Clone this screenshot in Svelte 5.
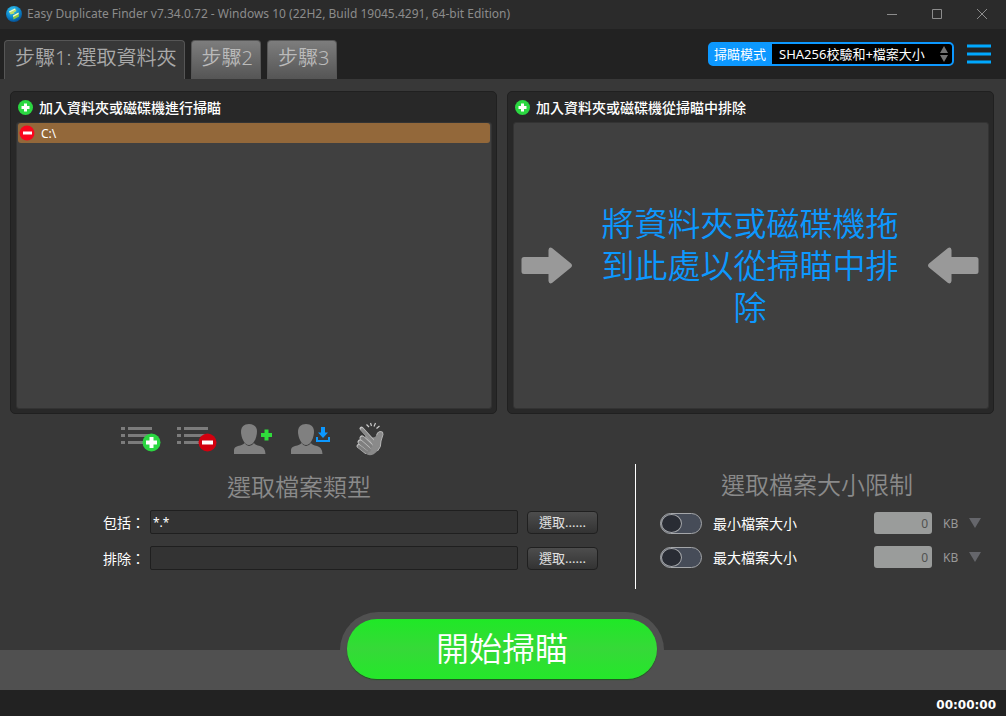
<script lang="ts">
  let scanMode = 'sha256';
  let includeMask = '*.*';
  let excludeMask = '';
  let activeTab = 0;

  const tabs = ['步驟1: 選取資料夾', '步驟2', '步驟3'];
  const folders = ['C:\\'];

  let limits = [
    { id: 'min', label: '最小檔案大小', enabled: false, value: '0', unit: 'KB' },
    { id: 'max', label: '最大檔案大小', enabled: false, value: '0', unit: 'KB' }
  ];
</script>

<div class="window">
  <header class="titlebar">
    <svg class="logo" width="16" height="16" viewBox="0 0 16 16" aria-hidden="true">
      <defs>
        <radialGradient id="globe" cx="0.4" cy="0.25" r="0.8">
          <stop offset="0" stop-color="#35c5ef" />
          <stop offset="0.6" stop-color="#0b83c9" />
          <stop offset="1" stop-color="#06498c" />
        </radialGradient>
      </defs>
      <circle cx="8" cy="8" r="8" fill="url(#globe)" />
      <path d="M3 5.500 9 2.500 10.500 5 8 6.500 8.500 7.500 4.500 8.500Z" fill="#b9dc6a" />
      <path d="M3 5.500 9 2.500 9.500 3.500 3.500 6.500Z" fill="#f2f8dc" />
      <path d="M7 9.500 12.500 6.500 13 10.500 7.500 13.500Z" fill="#8cc63f" />
      <path d="M7 9.500 12.500 6.500 12.700 8 7.200 11Z" fill="#eef6d2" />
    </svg>
    <span class="title">Easy Duplicate Finder v7.34.0.72 - Windows 10 (22H2, Build 19045.4291, 64-bit Edition)</span>
    <div class="window-buttons">
      <button aria-label="Minimize">
        <svg width="12" height="12" viewBox="0 0 12 12"><path d="M1 6.500H11" /></svg>
      </button>
      <button aria-label="Maximize">
        <svg width="12" height="12" viewBox="0 0 12 12"><path d="M1.500 1.500H10.500V10.500H1.500Z" /></svg>
      </button>
      <button aria-label="Close">
        <svg width="12" height="12" viewBox="0 0 12 12"><path d="M1 1 11 11M11 1 1 11" /></svg>
      </button>
    </div>
  </header>

  <nav class="tabbar">
    <div class="tabs" role="tablist">
      {#each tabs as tab, i}
        <button
          class="tab"
          class:active={activeTab === i}
          role="tab"
          aria-selected={activeTab === i}
          on:click={() => (activeTab = i)}>{tab}</button>
      {/each}
    </div>
    <div class="mode">
      <label for="scan-mode">掃瞄模式</label>
      <div class="mode-field">
        <select id="scan-mode" bind:value={scanMode}>
          <option value="sha256">SHA256校驗和+檔案大小</option>
        </select>
        <svg width="8" height="16" viewBox="0 0 8 16" aria-hidden="true">
          <path d="M4 0 8 7H0ZM0 9H8L4 16Z" fill="#737373" />
        </svg>
      </div>
    </div>
    <button class="menu" aria-label="Menu">
      <svg width="24" height="20" viewBox="0 0 24 20">
        <path d="M0 2H24M0 10H24M0 18H24" stroke="#00a8ff" stroke-width="3" />
      </svg>
    </button>
  </nav>

  <main>
    <div class="panels">
      <section class="panel">
        <button class="panel-head">
          <svg width="15" height="15" viewBox="0 0 15 15" aria-hidden="true">
            <circle cx="7.500" cy="7.500" r="7.500" fill="#2bd741" />
            <path d="M7.500 3.500V11.500M3.500 7.500H11.500" stroke="#fff" stroke-width="3" />
          </svg>
          加入資料夾或磁碟機進行掃瞄
        </button>
        <ul class="list">
          {#each folders as folder}
            <li>
              <button class="remove" aria-label="Remove">
                <svg width="16" height="16" viewBox="0 0 16 16">
                  <circle cx="8" cy="8" r="7.500" fill="#f9061c" />
                  <path d="M4 8H13" stroke="#fff" stroke-width="3" />
                </svg>
              </button>
              {folder}
            </li>
          {/each}
        </ul>
      </section>

      <section class="panel">
        <button class="panel-head">
          <svg width="15" height="15" viewBox="0 0 15 15" aria-hidden="true">
            <circle cx="7.500" cy="7.500" r="7.500" fill="#2bd741" />
            <path d="M7.500 3.500V11.500M3.500 7.500H11.500" stroke="#fff" stroke-width="3" />
          </svg>
          加入資料夾或磁碟機從掃瞄中排除
        </button>
        <div class="list drop">
          <svg width="52" height="37" viewBox="0 0 52 37" aria-hidden="true">
            <path d="M3 10H27.500V3Q28 -0.500 31 1L50 16.500Q52 18.500 50 20.500L31 36Q28 37.500 27.500 34V27H3Q0.500 27 0.500 24.500V12.500Q0.500 10 3 10Z" fill="#999" />
          </svg>
          <p>將資料夾或磁碟機拖到此處以從掃瞄中排除</p>
          <svg width="52" height="37" viewBox="0 0 52 37" aria-hidden="true">
            <path d="M49 10H24.500V3Q24 -0.500 21 1L2 16.500Q0 18.500 2 20.500L21 36Q24 37.500 24.500 34V27H49Q51.500 27 51.500 24.500V12.500Q51.500 10 49 10Z" fill="#999" />
          </svg>
        </div>
      </section>

      <div class="toolbar">
        <button aria-label="Add to list">
          <svg width="42" height="36" viewBox="0 0 42 36">
            <path d="M2 8.500H6M9 8.500H33M2 15.500H6M9 15.500H33M2 22.500H6M9 22.500H33" stroke="#7c7c7c" stroke-width="3" />
            <circle cx="32.500" cy="22.500" r="9" fill="#2bd741" />
            <path d="M32.500 17V28M27 22.500H38" stroke="#fff" stroke-width="4" />
          </svg>
        </button>
        <button aria-label="Remove from list">
          <svg width="42" height="36" viewBox="0 0 42 36">
            <path d="M2 8.500H6M9 8.500H33M2 15.500H6M9 15.500H33M2 22.500H6M9 22.500H33" stroke="#7c7c7c" stroke-width="3" />
            <circle cx="32.500" cy="22.500" r="9" fill="#d2000f" />
            <path d="M27 22.500H38" stroke="#fff" stroke-width="4" />
          </svg>
        </button>
        <button aria-label="Add user folders">
          <svg width="42" height="36" viewBox="0 0 42 36">
            <path d="M18 4C23 4 26 7 26 11.500C26 17 23 25 18 25C13 25 10 17 10 11.500C10 7 13 4 18 4Z" fill="#808080" />
            <path d="M3 34V30Q3 27 7 26Q12 25 13.500 23Q15.500 26 18 26Q21 26 23 23Q24 25 29 26Q34 27 34.500 34Z" fill="#808080" />
            <path d="M35.500 9.500V20.500M30 15H41" stroke="#2fdc3b" stroke-width="4" />
          </svg>
        </button>
        <button aria-label="Load user folders">
          <svg width="44" height="36" viewBox="0 0 44 36">
            <path d="M19 4C24 4 27 7 27 11.500C27 17 24 25 19 25C14 25 11 17 11 11.500C11 7 14 4 19 4Z" fill="#808080" />
            <path d="M4 34V30Q4 27 8 26Q13 25 14.500 23Q16.500 26 19 26Q22 26 24 23Q25 25 30 26Q35 27 35.500 34Z" fill="#808080" />
            <path d="M34 7H38V12.500H41L36 18 31 12.500H34Z" fill="#0c98ff" />
            <path d="M30 17V21H42V17" fill="none" stroke="#0c98ff" stroke-width="2" />
          </svg>
        </button>
        <button aria-label="Quick select">
          <svg width="42" height="36" viewBox="0 0 42 36">
            <path d="M21.500 4.500 24 7M25.500 3 26.500 6M30.500 3 29 6.500M34.500 6 31.500 8.500" stroke="#ccc" stroke-width="1.200" />
            <path d="M22 14 27 17.500Q30 18 31.500 15.500Q32 12 35 11.500Q38.500 11 38 14.500L36 21Q36.500 27 32.500 31Q27 37 22 34.500L14 25Z" fill="#8a8a8a" />
            <path d="M31.500 15.500Q32 12 35 11.500Q38.500 11 38 14.500L36 21Q36.500 27 32.500 31" fill="none" stroke="#b5b5b5" />
            <g stroke-linecap="round">
              <path d="M16.500 8.500 27 20" stroke="#c2c2c2" stroke-width="4" />
              <path d="M17 9.500 27.500 21" stroke="#888" stroke-width="3" />
              <path d="M17 18 25 25" stroke="#c2c2c2" stroke-width="5" />
              <path d="M17.500 18.500 25.500 26" stroke="#7f7f7f" stroke-width="4" />
              <path d="M15 22 23 29" stroke="#c2c2c2" stroke-width="5" />
              <path d="M15.500 22.500 24 30" stroke="#7f7f7f" stroke-width="4" />
              <path d="M13.500 26 21 32" stroke="#c2c2c2" stroke-width="4" />
              <path d="M14 26.500 22 32.500" stroke="#7f7f7f" stroke-width="3" />
            </g>
          </svg>
        </button>
      </div>
    </div>

    <div class="settings">
      <section class="types">
        <h2>選取檔案類型</h2>
        <div class="mask-row">
          <label for="include-mask">包括：</label>
          <input id="include-mask" type="text" bind:value={includeMask} />
          <button>選取......</button>
        </div>
        <div class="mask-row">
          <label for="exclude-mask">排除：</label>
          <input id="exclude-mask" type="text" bind:value={excludeMask} />
          <button>選取......</button>
        </div>
      </section>

      <section class="limits">
        <h2>選取檔案大小限制</h2>
        {#each limits as limit (limit.id)}
          <div class="limit-row">
            <input id="{limit.id}-on" class="toggle" type="checkbox" bind:checked={limit.enabled} />
            <label for="{limit.id}-on">{limit.label}</label>
            <input class="size" type="text" aria-label={limit.label} bind:value={limit.value} />
            <div class="unit">
              <select aria-label="{limit.label} KB" bind:value={limit.unit}>
                <option>KB</option>
              </select>
              <svg width="12" height="10" viewBox="0 0 12 10" aria-hidden="true">
                <path d="M0 0H12L6 10Z" fill="#65666b" />
              </svg>
            </div>
          </div>
        {/each}
      </section>
    </div>
  </main>

  <div class="launch">
    <div class="halo">
      <button>開始掃瞄</button>
    </div>
  </div>

  <footer>00:00:00</footer>
</div>

<style>
  :global(body) {
    margin: 0;
    background: #383838;
  }

  .window {
    display: flex;
    flex-direction: column;
    min-height: 100vh;
    background: #383838;
    color: #fff;
    font-family: 'Noto Sans', 'Noto Sans CJK TC', sans-serif;
    font-size: 14px;
  }

  .window * {
    box-sizing: border-box;
  }

  button,
  input,
  select {
    margin: 0;
    padding: 0;
    border: 0;
    font: inherit;
    color: inherit;
    background: none;
  }

  select {
    appearance: none;
    outline: none;
  }

  svg {
    display: block;
    flex: none;
  }

  .titlebar {
    display: flex;
    align-items: center;
    height: 29px;
    padding: 0 10px 2px 6px;
    background: #2b2b2b;
  }

  .title {
    flex: 1;
    margin-left: 5px;
    color: #8c8c8c;
    font-size: 12px;
    white-space: nowrap;
  }

  .window-buttons {
    display: flex;
    gap: 17px;
  }

  .window-buttons button {
    display: grid;
    place-items: center;
    width: 28px;
    height: 26px;
  }

  .window-buttons path {
    fill: none;
    stroke: #8c8c8c;
  }

  .tabbar {
    display: flex;
    align-items: center;
    height: 50px;
    padding: 0 15px 0 4px;
    background: #222;
  }

  .tabs {
    display: flex;
    flex: 1;
    align-self: flex-end;
    gap: 6px;
  }

  .tab {
    height: 39px;
    padding: 0 7px 4px 10px;
    border: 1px solid #565656;
    border-bottom: 0;
    border-radius: 4px 4px 0 0;
    background: linear-gradient(#7d7d7d, #555);
    color: #bbb;
    font-size: 20px;
    font-weight: 350;
    line-height: 34px;
    white-space: nowrap;
  }

  .tab.active {
    background: #383838;
    color: #aaa;
  }

  .mode {
    display: flex;
    height: 24px;
    border: 2px solid #0c98ff;
    border-radius: 5px;
    background: #0c98ff;
    font-size: 13px;
    line-height: 20px;
  }

  .mode label {
    padding: 0 6px 0 4px;
  }

  .mode-field {
    display: flex;
    align-items: center;
    padding: 0 4px 0 7px;
    border-radius: 0 3px 3px 0;
    background: #000;
  }

  .mode-field select {
    width: 161px;
    font-size: 13px;
  }

  .menu {
    margin-left: 13px;
  }

  main {
    display: flex;
    flex: 1;
    flex-direction: column;
  }

  .panels {
    display: grid;
    flex: 1;
    grid-template-columns: 1fr 1fr;
    grid-template-rows: 1fr 50px;
    column-gap: 10px;
    padding: 12px 12px 0 10px;
  }

  .panel {
    display: flex;
    flex-direction: column;
    min-height: 323px;
    padding: 0 4px 4px 5px;
    border: 1px solid #202020;
    border-radius: 5px;
    background: #282828;
  }

  .panel-head {
    display: flex;
    align-items: center;
    gap: 6px;
    height: 30px;
    padding-left: 2px;
    font-weight: 500;
  }

  .list {
    flex: 1;
    margin: 0;
    padding: 0 1px;
    border: 1px solid #333;
    border-radius: 3px;
    background: #404040;
    list-style: none;
  }

  .list li {
    display: flex;
    align-items: center;
    height: 20px;
    border-radius: 3px;
    background: #93683a;
    font-size: 12px;
  }

  .remove {
    margin: 0 6px 0 1px;
  }

  .drop {
    display: flex;
    align-items: center;
    justify-content: space-between;
    padding: 0 9px 0 7px;
  }

  .drop p {
    width: 300px;
    margin: 0;
    color: #0c98ff;
    font-size: 33px;
    font-weight: 350;
    line-height: 42px;
    text-align: center;
  }

  .toolbar {
    display: flex;
    align-items: center;
    justify-content: center;
    gap: 14px;
    padding: 0 2px 2px 0;
  }

  .settings {
    display: grid;
    grid-template-columns: 636fr 370fr;
    margin-bottom: 23px;
  }

  h2 {
    margin: 0;
    color: #8a8a8a;
    font-size: 24px;
    font-weight: 350;
    line-height: 42px;
    text-align: center;
  }

  .types {
    display: flex;
    flex-direction: column;
    gap: 12px;
    min-height: 125px;
    padding-right: 37px;
    border-right: 1px solid #fff;
  }

  .types h2 {
    margin-bottom: -12px;
    line-height: 46px;
  }

  .mask-row {
    display: grid;
    grid-template-columns: 38px 1fr 71px;
    column-gap: 9px;
    align-items: center;
    padding-left: 103px;
  }

  .mask-row label {
    white-space: nowrap;
  }

  .mask-row input {
    min-width: 0;
    height: 24px;
    padding: 0 2px;
    border: 1px solid #1f1f1f;
    border-radius: 2px;
    background: #333;
    font-size: 12px;
  }

  .mask-row button {
    height: 23px;
    border: 1px solid #202020;
    border-radius: 4px;
    background: linear-gradient(#4d4d4d, #333);
    color: #e0e0e0;
    font-size: 13px;
    line-height: 20px;
  }

  .limits {
    padding: 0 25px 0 24px;
  }

  .limits h2 {
    margin-right: 7px;
  }

  .limit-row {
    display: flex;
    align-items: center;
    height: 34px;
  }

  .limit-row label {
    flex: 1;
    margin-left: 11px;
  }

  .toggle {
    display: flex;
    align-items: center;
    width: 42px;
    height: 21px;
    appearance: none;
    border: 1px solid #a4a6a9;
    border-radius: 11px;
    background: #464c58;
  }

  .toggle::before {
    content: '';
    width: 21px;
    height: 19px;
    border: 1px solid #a4a6a9;
    border-radius: 50%;
    background: #292c34;
    box-sizing: border-box;
  }

  .toggle:checked {
    justify-content: flex-end;
  }

  .size {
    width: 58px;
    height: 22px;
    padding-right: 4px;
    border-radius: 3px;
    background: #9a9c9b;
    color: #505251;
    font-size: 12px;
    text-align: right;
  }

  .unit {
    display: flex;
    align-items: center;
    margin-left: 11px;
    color: #999;
    font-size: 12px;
  }

  .unit select {
    width: 26px;
  }

  .launch {
    display: flex;
    justify-content: center;
    padding-right: 2px;
    background: linear-gradient(transparent 38px, #505050 38px);
  }

  .halo {
    height: 78px;
    padding: 7px;
    border-radius: 38px 38px 0 0;
    background: #505050;
  }

  .halo button {
    display: block;
    width: 310px;
    height: 60px;
    border-radius: 30px;
    background: linear-gradient(#1fe826, #36d938 50%, #24e82a);
    box-shadow: 0 1px 1px #1d5c1d;
    font-size: 33px;
    font-weight: 350;
    line-height: 60px;
  }

  footer {
    height: 26px;
    padding: 0 10px;
    background: #222;
    font-family: 'DejaVu Sans', sans-serif;
    font-size: 12px;
    font-weight: 700;
    line-height: 30px;
    text-align: right;
  }
</style>
